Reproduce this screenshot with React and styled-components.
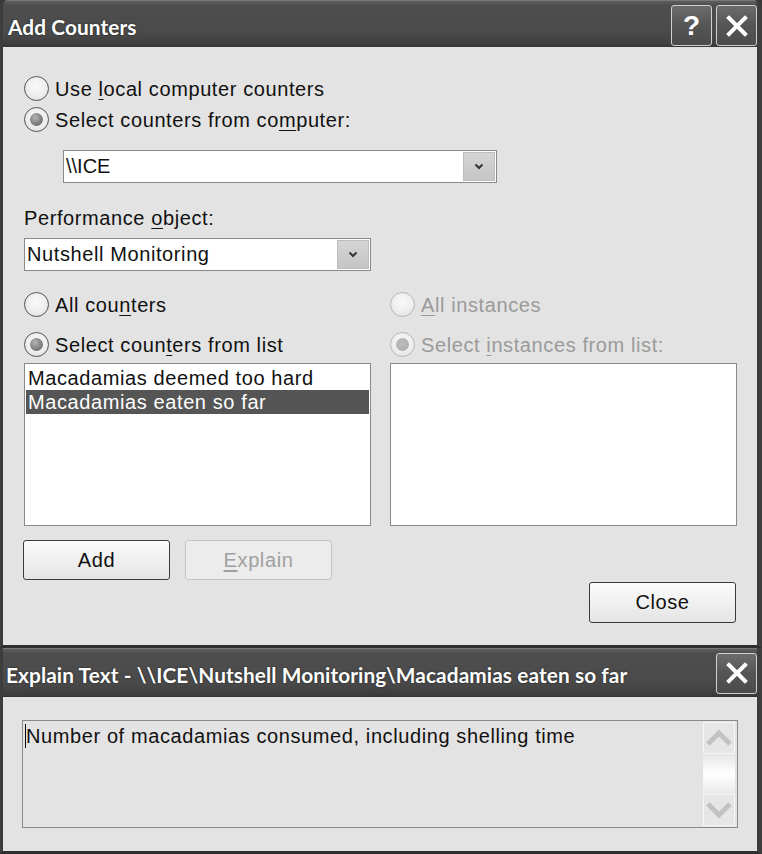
import React from "react";
import styled, { createGlobalStyle, css } from "styled-components";

const SANS = `"Liberation Sans", Arimo, Arial, Helvetica, sans-serif`;

const Global = createGlobalStyle`
  html, body { margin: 0; padding: 0; background: #3a3a3a; }
  body { font-family: ${SANS}; }
  * { box-sizing: border-box; }
`;

const uiText = css`
  font-family: ${SANS};
  font-size: 20px;
  letter-spacing: 0.6px;
`;

const Screen = styled.div`
  width: 762px;
  display: flex;
  flex-direction: column;
`;

const Window = styled.div`
  display: flex;
  flex-direction: column;
  border-left: 3px solid #3d3d3d;
  border-right: 5px solid #3d3d3d;
  border-bottom: 3px solid #2e2e2e;
  background: #3d3d3d;
  border-radius: ${(p) => (p.$rounded ? "7px 7px 0 0" : "0")};
  overflow: hidden;
`;

const TitleBar = styled.div`
  height: ${(p) => p.$h}px;
  margin: 0 -5px 0 -3px;
  display: flex;
  align-items: center;
  justify-content: space-between;
  padding: 0 5px 0 ${(p) => p.$pl}px;
  background: linear-gradient(#5e5e5e 0px, #4e4e4e 4px, #4a4a4a 70%, #404040 92%, #363636 100%);
  border-top: 1px solid #777;
`;

const TitleText = styled.div`
  color: #fff;
  font-family: Lato, "DejaVu Sans", sans-serif;
  font-weight: 700;
  font-size: 20.8px;
  letter-spacing: 0.1px;
  white-space: nowrap;
  margin-top: ${(p) => p.$mt || 0}px;
  text-shadow: 0 0 2px rgba(0, 0, 0, 0.6);
`;

const TitleButtons = styled.div`
  display: flex;
  gap: 4px;
  align-self: flex-start;
  margin-top: 4px;
`;

const CaptionButton = styled.div`
  width: 41px;
  height: 41px;
  border: 1px solid #d0d0d0;
  border-radius: 3px;
  background: linear-gradient(#6c6c6c, #555 50%, #4b4b4b);
  display: flex;
  align-items: center;
  justify-content: center;
  color: #fff;
  font-family: ${SANS};
  font-weight: 700;
  font-size: 28px;
`;

const Body = styled.div`
  background: #e3e3e3;
  display: flex;
  flex-direction: column;
  padding: ${(p) => p.$pad};
`;

const Label = styled.span`
  ${uiText};
  display: block;
  color: ${(p) => (p.$disabled ? "#9a9a9a" : "#111")};
  line-height: 24px;
  height: 24px;
  white-space: nowrap;
  margin-top: ${(p) => p.$mt || 0}px;
  u { text-decoration: underline; text-underline-offset: 3px; text-decoration-thickness: 1px; }
`;

const RadioRow = styled.div`
  display: flex;
  align-items: center;
  gap: 6px;
  height: 25px;
  margin-top: ${(p) => p.$mt || 0}px;
`;

const RadioCircle = styled.span`
  width: 25px;
  height: 25px;
  border-radius: 50%;
  flex: none;
  border: 1px solid ${(p) => (p.$disabled ? "#b8b8b8" : "#555")};
  background: radial-gradient(circle at 50% 40%, #fafafa 0%, #ececec 60%, #d8d8d8 100%);
  display: flex;
  align-items: center;
  justify-content: center;
  ${(p) =>
    p.$checked &&
    css`
      &::after {
        content: "";
        width: 13px;
        height: 13px;
        border-radius: 50%;
        background: ${p.$disabled
          ? "radial-gradient(circle at 45% 40%, #bdbdbd, #a8a8a8)"
          : "radial-gradient(circle at 40% 35%, #b5b5b5, #808080 55%, #5e5e5e)"};
      }
    `}
`;

function Radio({ checked, disabled, children, mt }) {
  return (
    <RadioRow $mt={mt}>
      <RadioCircle $checked={checked} $disabled={disabled} />
      <Label $disabled={disabled}>{children}</Label>
    </RadioRow>
  );
}

const Combo = styled.div`
  ${uiText};
  width: ${(p) => p.$w}px;
  height: 33px;
  margin-top: ${(p) => p.$mt}px;
  margin-left: ${(p) => p.$ml || 0}px;
  background: #fff;
  border: 1px solid #8a8a8a;
  display: flex;
  align-items: center;
  justify-content: space-between;
  padding: 1px 1px 1px 2px;
  letter-spacing: ${(p) => p.$ls}px;
  color: #111;
`;

const ComboArrow = styled.div`
  width: 32px;
  height: 29px;
  background: linear-gradient(#d4d4d4, #c6c6c6);
  border: 1px solid #bdbdbd;
  display: flex;
  align-items: center;
  justify-content: center;
`;

const Chevron = () => (
  <svg width="10" height="7" viewBox="0 0 10 7">
    <path d="M1.5 1.5 L5 5 L8.5 1.5" stroke="#333" strokeWidth="2" fill="none" />
  </svg>
);

const Columns = styled.div`
  display: grid;
  grid-template-columns: 347px 347px;
  column-gap: 19px;
  margin-top: 21px;
`;

const Column = styled.div`
  display: flex;
  flex-direction: column;
`;

const ListBox = styled.div`
  height: 163px;
  margin-top: 6px;
  background: #fff;
  border: 1px solid #8a8a8a;
  padding: 2px 1px;
  display: flex;
  flex-direction: column;
`;

const ListItem = styled.div`
  ${uiText};
  height: 24px;
  line-height: 24px;
  padding-left: 2px;
  white-space: nowrap;
  color: ${(p) => (p.$selected ? "#fff" : "#111")};
  background: ${(p) => (p.$selected ? "#555" : "transparent")};
`;

const ButtonRow = styled.div`
  display: flex;
  gap: 15px;
  margin-top: 14px;
  margin-left: ${(p) => p.$ml || 0}px;
`;

const Button = styled.div`
  ${uiText};
  width: 147px;
  height: ${(p) => p.$h || 40}px;
  margin-top: ${(p) => p.$mt || 0}px;
  border-radius: 3px;
  border: 1px solid ${(p) => (p.$disabled ? "#c4c4c4" : "#3a3a3a")};
  background: ${(p) =>
    p.$disabled ? "#ececec" : "linear-gradient(#fbfbfb, #f0f0f0 50%, #e4e4e4)"};
  color: ${(p) => (p.$disabled ? "#a0a0a0" : "#111")};
  display: flex;
  align-items: center;
  justify-content: center;
  u { text-decoration: underline; text-underline-offset: 3px; }
`;

const CloseRow = styled.div`
  display: flex;
  justify-content: flex-end;
`;

const ExplainBox = styled.div`
  height: 108px;
  border: 1px solid #8a8a8a;
  background: #e3e3e3;
  display: flex;
  justify-content: space-between;
  padding: 1px 2px 1px 2px;
`;

const ExplainText = styled.div`
  ${uiText};
  color: #111;
  line-height: 24px;
  padding-top: 2px;
  display: flex;
  white-space: nowrap;
`;

const Caret = styled.span`
  width: 1px;
  height: 24px;
  background: #000;
`;

const ScrollBar = styled.div`
  width: 32px;
  display: flex;
  flex-direction: column;
`;

const ScrollButton = styled.div`
  height: 32px;
  background: #e6e6e6;
  border: 1px solid #f6f6f6;
  display: flex;
  align-items: center;
  justify-content: center;
`;

const ScrollTrack = styled.div`
  flex: 1;
  background: linear-gradient(#e6e6e6, #fff 50%, #e9e9e9);
`;

const ScrollArrow = ({ dir }) => (
  <svg width="28" height="20" viewBox="0 0 28 20">
    <path
      d={dir === "up" ? "M3 16 L14 5 L25 16" : "M3 4 L14 15 L25 4"}
      stroke="#c2c2c2"
      strokeWidth="5"
      fill="none"
    />
  </svg>
);

const XIcon = () => (
  <svg width="22" height="22" viewBox="0 0 22 22">
    <path d="M3 3 L19 19 M19 3 L3 19" stroke="#fff" strokeWidth="4" strokeLinecap="square" />
  </svg>
);

export default function App() {
  return (
    <Screen>
      <Global />
      <Window $rounded>
        <TitleBar $h={47} $pl={8}>
          <TitleText $mt={4}>Add Counters</TitleText>
          <TitleButtons>
            <CaptionButton>?</CaptionButton>
            <CaptionButton>
              <XIcon />
            </CaptionButton>
          </TitleButtons>
        </TitleBar>
        <Body $pad="29px 21px 22px 21px">
          <Radio>
            Use <u>l</u>ocal computer counters
          </Radio>
          <Radio checked mt={6}>
            Select counters from co<u>m</u>puter:
          </Radio>
          <Combo $w={434} $mt={18} $ml={39} $ls={0}>
            <span>\\ICE</span>
            <ComboArrow>
              <Chevron />
            </ComboArrow>
          </Combo>
          <Label $mt={23}>
            Performance <u>o</u>bject:
          </Label>
          <Combo $w={347} $mt={8} $ls={0.6}>
            <span>Nutshell Monitoring</span>
            <ComboArrow>
              <Chevron />
            </ComboArrow>
          </Combo>
          <Columns>
            <Column>
              <Radio>
                All cou<u>n</u>ters
              </Radio>
              <Radio checked mt={15}>
                Select coun<u>t</u>ers from list
              </Radio>
              <ListBox>
                <ListItem>Macadamias deemed too hard</ListItem>
                <ListItem $selected>Macadamias eaten so far</ListItem>
              </ListBox>
            </Column>
            <Column>
              <Radio disabled>
                <u>A</u>ll instances
              </Radio>
              <Radio disabled checked mt={15}>
                Select <u>i</u>nstances from list:
              </Radio>
              <ListBox />
            </Column>
          </Columns>
          <ButtonRow $ml={-1}>
            <Button>Add</Button>
            <Button $disabled>
              <u>E</u>xplain
            </Button>
          </ButtonRow>
          <CloseRow>
            <Button $mt={2} $h={41}>
              Close
            </Button>
          </CloseRow>
        </Body>
      </Window>
      <Window>
        <TitleBar $h={49} $pl={6}>
          <TitleText $mt={2}>Explain Text - \\ICE\Nutshell Monitoring\Macadamias eaten so far</TitleText>
          <CaptionButton>
            <XIcon />
          </CaptionButton>
        </TitleBar>
        <Body $pad="23px 19px 23px 19px">
          <ExplainBox>
            <ExplainText>
              <Caret />
              Number of macadamias consumed, including shelling time
            </ExplainText>
            <ScrollBar>
              <ScrollButton>
                <ScrollArrow dir="up" />
              </ScrollButton>
              <ScrollTrack />
              <ScrollButton>
                <ScrollArrow dir="down" />
              </ScrollButton>
            </ScrollBar>
          </ExplainBox>
        </Body>
      </Window>
    </Screen>
  );
}
